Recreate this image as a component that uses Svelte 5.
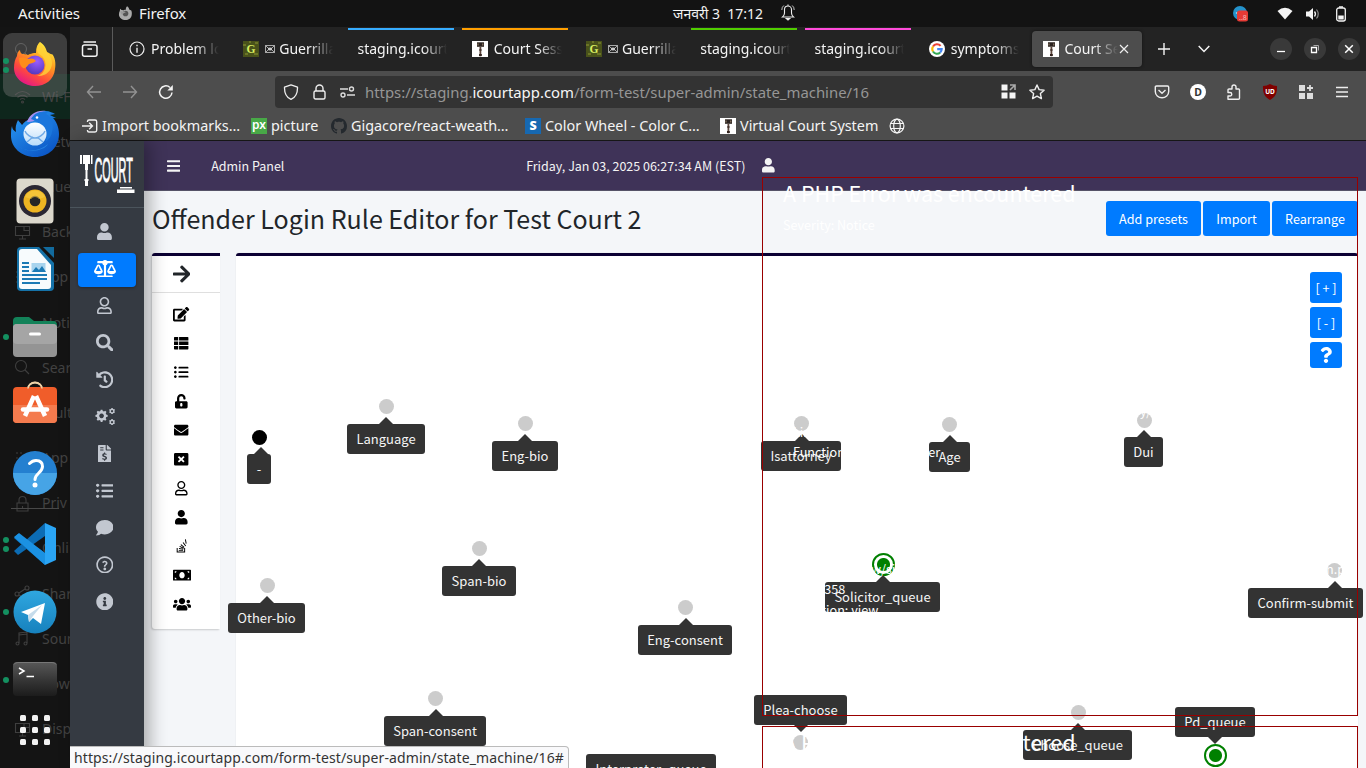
<script>
  const fa = {
    user: [448, 'M224 256c70.7 0 128-57.3 128-128S294.7 0 224 0 96 57.3 96 128s57.3 128 128 128zm89.6 32h-16.7c-22.2 10.2-46.9 16-72.9 16s-50.6-5.8-72.9-16h-16.7C60.2 288 0 348.2 0 422.4V464c0 26.5 21.5 48 48 48h352c26.5 0 48-21.5 48-48v-41.6c0-74.2-60.2-134.4-134.4-134.4z'],
    userO: [448, 'M313.6 304c-28.7 0-42.5 16-89.6 16-47.1 0-60.8-16-89.6-16C60.2 304 0 364.2 0 438.4V464c0 26.5 21.5 48 48 48h352c26.5 0 48-21.5 48-48v-25.6c0-74.2-60.2-134.4-134.4-134.4zM400 464H48v-25.6c0-47.6 38.8-86.4 86.4-86.4 14.6 0 38.3 16 89.6 16 51.7 0 74.9-16 89.6-16 47.6 0 86.4 38.8 86.4 86.4V464zM224 288c79.5 0 144-64.5 144-144S303.5 0 224 0 80 64.5 80 144s64.5 144 144 144zm0-240c52.9 0 96 43.1 96 96s-43.1 96-96 96-96-43.1-96-96 43.1-96 96-96z'],
    scale: [640, 'M256 336h-.02c0-16.18 1.34-8.73-85.05-181.51-17.65-35.29-68.19-35.36-85.87 0C-2.06 328.75.02 320.33.02 336H0c0 44.18 57.31 80 128 80s128-35.82 128-80zM128 176l72 144H56l72-144zm511.98 160c0-16.18 1.34-8.73-85.05-181.51-17.65-35.29-68.19-35.36-85.87 0-87.12 174.26-85.04 165.84-85.04 181.51H384c0 44.18 57.31 80 128 80s128-35.82 128-80h-.02zM440 320l72-144 72 144H440zm88 128H352V153.25c23.51-10.29 41.16-31.48 46.39-57.25H528c8.84 0 16-7.16 16-16V48c0-8.84-7.16-16-16-16H383.64C369.04 12.68 346.09 0 320 0s-49.04 12.68-63.64 32H112c-8.84 0-16 7.16-16 16v32c0 8.84 7.16 16 16 16h129.61c5.23 25.76 22.87 46.96 46.39 57.25V448H112c-8.84 0-16 7.16-16 16v32c0 8.84 7.16 16 16 16h416c8.84 0 16-7.16 16-16v-32c0-8.84-7.16-16-16-16z'],
    search: [512, 'M505 442.7L405.3 343c-4.5-4.5-10.6-7-17-7H372c27.6-35.3 44-79.7 44-128C416 93.1 322.9 0 208 0S0 93.1 0 208s93.1 208 208 208c48.3 0 92.7-16.4 128-44v16.3c0 6.4 2.5 12.5 7 17l99.7 99.7c9.4 9.4 24.6 9.4 33.9 0l28.3-28.3c9.4-9.4 9.4-24.6.1-34zM208 336c-70.7 0-128-57.2-128-128 0-70.7 57.2-128 128-128 70.7 0 128 57.2 128 128 0 70.7-57.2 128-128 128z'],
    history: [512, 'M504 255.531c.253 136.64-111.18 248.372-247.82 248.468-59.015.042-113.223-20.53-155.822-54.911-11.077-8.94-11.905-25.541-1.839-35.607l11.267-11.267c8.609-8.609 22.353-9.551 31.891-1.984C173.062 425.135 212.781 440 256 440c101.705 0 184-82.311 184-184 0-101.705-82.311-184-184-184-48.814 0-93.149 18.969-126.068 49.932l50.754 50.754c10.08 10.08 2.941 27.314-11.313 27.314H24c-8.837 0-16-7.163-16-16V38.627c0-14.254 17.234-21.393 27.314-11.314l49.372 49.372C129.209 34.136 189.552 8 256 8c136.81 0 247.747 110.78 248 247.531zm-180.912 78.784l9.823-12.63c8.138-10.463 6.253-25.542-4.21-33.679L288 256.349V152c0-13.255-10.745-24-24-24h-16c-13.255 0-24 10.745-24 24v135.651l65.409 50.874c10.463 8.137 25.541 6.253 33.679-4.21z'],
    cogs: [640, 'M185 90l10-40h50l10 40 36 15 36-22 36 36-22 36 15 36 42 10v50l-42 10-15 36 22 36-36 36-36-22-36 15-10 42h-50l-10-42-36-15-36 22-36-36 22-36-15-36-42-10v-50l42-10 15-36-22-36 36-36 36 22zM220 160a68 68 0 1 0 .1 0zM500 22l8-20h34l8 20 20 12 22-3 17 29-14 18v24l14 18-17 29-22-3-20 12-8 20h-34l-8-20-20-12-22 3-17-29 14-18v-24l-14-18 17-29 22 3zM525 60a32 32 0 1 0 .1 0zM500 342l8-20h34l8 20 20 12 22-3 17 29-14 18v24l14 18-17 29-22-3-20 12-8 20h-34l-8-20-20-12-22 3-17-29 14-18v-24l-14-18 17-29 22 3zM525 380a32 32 0 1 0 .1 0z'],
    invoice: [384, 'M377 105L279.100 7c-4.500-4.500-10.600-7-17-7H256v128h128v-6.100c0-6.300-2.500-12.400-7-16.900zM224 136V0H24C10.700 0 0 10.700 0 24v464c0 13.300 10.700 24 24 24h336c13.300 0 24-10.700 24-24V160H248c-13.200 0-24-10.800-24-24zM64 64h96v32H64zM64 128h96v32H64zM176 216h32v28c22 1 36 7 48 16l-20 28c-14-9-27-13-41-13-18 0-27 7-27 17 0 12 12 17 36 25 34 11 58 23 58 59 0 31-21 51-54 56v28h-32v-28c-22-2-41-9-58-22l21-29c16 12 31 17 48 17 20 0 30-7 30-19 0-14-14-19-38-27-32-11-55-23-55-56 0-28 20-48 52-53z'],
    list: [512, 'M48 48a48 48 0 1 0 .1 0zM48 208a48 48 0 1 0 .1 0zM48 368a48 48 0 1 0 .1 0zM176 64h320q16 0 16 16v32q0 16-16 16H176q-16 0-16-16V80q0-16 16-16zM176 224h320q16 0 16 16v32q0 16-16 16H176q-16 0-16-16v-32q0-16 16-16zM176 384h320q16 0 16 16v32q0 16-16 16H176q-16 0-16-16v-32q0-16 16-16z'],
    comment: [512, 'M256 32C114.600 32 0 125.100 0 240c0 49.600 21.400 95 57 130.700C44.500 421.100 2.700 466 2.200 466.500c-2.200 2.300-2.800 5.700-1.500 8.700S4.800 480 8 480c66.300 0 116-31.800 140.600-51.400 32.700 12.300 69 19.400 107.400 19.400 141.400 0 256-93.100 256-208S397.400 32 256 32z'],
    help: [512, 'M256 8a248 248 0 1 0 .1 0zM256 56a200 200 0 1 1-.1 0zM256 338a40 40 0 1 0 .1 0zM228 316v-12c0-50 58-58 58-92 0-18-14-28-32-28-19 0-30 9-42 24l-32-25c18-28 43-43 78-43 44 0 78 28 78 70 0 53-60 58-60 94v12z'],
    info: [512, 'M256 8C119.043 8 8 119.083 8 256c0 136.997 111.043 248 248 248s248-111.003 248-248C504 119.083 392.957 8 256 8zm0 110c23.196 0 42 18.804 42 42s-18.804 42-42 42-42-18.804-42-42 18.804-42 42-42zm56 254c0 6.627-5.373 12-12 12h-88c-6.627 0-12-5.373-12-12v-24c0-6.627 5.373-12 12-12h12v-64h-12c-6.627 0-12-5.373-12-12v-24c0-6.627 5.373-12 12-12h64c6.627 0 12 5.373 12 12v100h12c6.627 0 12 5.373 12 12v24z'],
    edit: [576, 'M402.600 83.200l90.200 90.200c3.800 3.800 3.800 10 0 13.800L274.400 405.600l-92.800 10.300c-12.400 1.400-22.900-9.100-21.500-21.500l10.300-92.800L388.800 83.200c3.800-3.800 10-3.800 13.800 0zm162-22.900l-48.800-48.800c-15.200-15.200-39.900-15.200-55.200 0l-35.400 35.400c-3.800 3.800-3.800 10 0 13.800l90.200 90.200c3.800 3.800 10 3.800 13.800 0l35.400-35.400c15.200-15.300 15.200-40 0-55.200zM384 346.200V448H64V128h229.800c3.200 0 6.200-1.300 8.500-3.500l40-40c7.600-7.600 2.200-20.500-8.500-20.500H48C21.500 64 0 85.500 0 112v352c0 26.500 21.500 48 48 48h352c26.500 0 48-21.500 48-48V306.200c0-10.700-12.900-16-20.500-8.500l-40 40c-2.200 2.300-3.500 5.300-3.500 8.500z'],
    thlist: [512, 'M0 56q0-24 24-24h125v128H0zM181 32h307q24 0 24 24v104H181zM0 192h149v128H0zM181 192h331v128H181zM0 352h149v128H24q-24 0-24-24zM181 352h331v104q0 24-24 24H181z'],
    unlock: [448, 'M400 256H152V152.900c0-39.600 31.700-72.500 71.300-72.900 40-.4 72.700 32.100 72.700 72v16c0 13.300 10.700 24 24 24h32c13.300 0 24-10.700 24-24v-16C376 68 307.500-.3 223.500 0 139.500.3 72 69.500 72 153.500V256H48c-26.500 0-48 21.500-48 48v160c0 26.500 21.500 48 48 48h352c26.500 0 48-21.500 48-48V304c0-26.500-21.500-48-48-48zM264 408c0 22.100-17.900 40-40 40s-40-17.900-40-40v-48c0-22.100 17.900-40 40-40s40 17.900 40 40v48z'],
    mail: [512, 'M502.300 190.800c3.900-3.100 9.700-.2 9.700 4.700V400c0 26.500-21.500 48-48 48H48c-26.500 0-48-21.500-48-48V195.600c0-5 5.700-7.800 9.700-4.700 22.400 17.400 52.100 39.500 154.100 113.600 21.100 15.400 56.700 47.800 92.200 47.600 35.700.3 72-32.800 92.300-47.600 102-74.100 131.600-96.300 154-113.700zM256 320c23.200.4 56.600-29.200 73.400-41.400 132.700-96.300 142.800-104.700 173.400-128.700 5.800-4.500 9.200-11.500 9.200-18.900v-19c0-26.500-21.500-48-48-48H48c-26.500 0-48 21.500-48 48v19c0 7.400 3.400 14.300 9.200 18.900 30.600 23.900 40.700 32.400 173.400 128.700 16.800 12.200 50.200 41.800 73.400 41.400z'],
    wclose: [512, 'M48 32h416q48 0 48 48v352q0 48-48 48H48q-48 0-48-48V80q0-48 48-48zM181 140l-45 45 71 71-71 71 45 45 75-71 75 71 45-45-71-71 71-71-45-45-75 71z'],
    stack: [384, 'M290 320h35v160H24V320h35v125h231zM98 396h155v35H98zM102 352l7-35 152 32-7 34zM122 280l15-32 141 66-15 32zM161 210l23-27 119 100-23 27zM238 137l28-21 93 125-28 21zM317 16l34-6 28 152-34 6z'],
    money: [640, 'M24 64h592q24 0 24 24v336q0 24-24 24H24q-24 0-24-24V88q0-24 24-24zM64 112v64q56-8 64-64zM576 112v64q-56-8-64-64zM64 400v-64q56 8 64 64zM576 400v-64q-56 8-64 64zM320 144c-53 0-96 50-96 112s43 112 96 112 96-50 96-112-43-112-96-112z'],
    users: [640, 'M96 224c35.300 0 64-28.700 64-64s-28.700-64-64-64-64 28.700-64 64 28.700 64 64 64zm448 0c35.300 0 64-28.700 64-64s-28.700-64-64-64-64 28.700-64 64 28.700 64 64 64zm32 32h-64c-17.600 0-33.500 7.100-45.100 18.600 40.300 22.100 68.900 62 75.100 109.400h66c17.700 0 32-14.300 32-32v-32c0-35.300-28.700-64-64-64zm-256 0c61.900 0 112-50.100 112-112S381.900 32 320 32 208 82.100 208 144s50.100 112 112 112zm76.800 32h-8.300c-20.800 10-43.900 16-68.500 16s-47.600-6-68.500-16h-8.300C179.600 288 128 339.600 128 403.200V432c0 26.500 21.500 48 48 48h288c26.500 0 48-21.500 48-48v-28.800c0-63.600-51.600-115.200-115.200-115.200zm-223.700-13.400C161.500 263.100 145.600 256 128 256H64c-35.300 0-64 28.700-64 64v32c0 17.700 14.300 32 32 32h65.900c6.300-47.400 34.900-87.300 75.200-109.400z'],
    arrow: [448, 'M190.500 66.900l22.200-22.200c9.400-9.400 24.600-9.400 33.900 0L441 239c9.400 9.400 9.400 24.600 0 33.900L246.600 467.300c-9.400 9.400-24.600 9.400-33.900 0l-22.200-22.200c-9.500-9.500-9.300-25 .4-34.300L311.400 296H24c-13.300 0-24-10.700-24-24v-32c0-13.300 10.700-24 24-24h287.400L190.900 101.200c-9.800-9.300-10-24.800-.4-34.300z'],
    bars: [448, 'M16 76h416q16 0 16 16v40q0 16-16 16H16q-16 0-16-16V92q0-16 16-16zM16 236h416q16 0 16 16v40q0 16-16 16H16q-16 0-16-16v-40q0-16 16-16zM16 396h416q16 0 16 16v40q0 16-16 16H16q-16 0-16-16v-40q0-16 16-16z'],
    question: [384, 'M202.021 0C122.202 0 70.503 32.703 29.914 91.026c-7.363 10.580-5.093 25.086 5.178 32.874l43.138 32.709c10.373 7.865 25.132 6.026 33.253-4.148 25.049-31.381 43.630-49.449 82.757-49.449 30.764 0 68.816 19.799 68.816 49.631 0 22.552-18.617 34.134-48.993 51.164-35.423 19.860-82.299 44.576-82.299 106.405V320c0 13.255 10.745 24 24 24h72.471c13.255 0 24-10.745 24-24v-5.773c0-42.860 125.268-44.645 125.268-160.627C377.504 66.256 286.902 0 202.021 0zM192 373.459c-38.196 0-69.271 31.075-69.271 69.271 0 38.195 31.075 69.270 69.271 69.270s69.271-31.075 69.271-69.271-31.075-69.270-69.271-69.270z']
  };

  const nav = ['user', 'scale', 'userO', 'search', 'history', 'cogs', 'invoice', 'list', 'comment', 'help', 'info'];
  const tools = ['edit', 'thlist', 'list', 'unlock', 'mail', 'wclose', 'userO', 'user', 'stack', 'money', 'users'];

  const settings = [
    ['wifi', 'Wi-F'], ['', 'Netw'], ['', 'Blue'], ['screen', 'Back'], ['grid', 'App'], ['', 'Noti'],
    ['search', 'Sear'], ['', 'Mult'], ['grid', 'App'], ['lock', 'Priv'], ['', 'Onli'],
    ['share', 'Shar'], ['music', 'Soun'], ['power', 'Pow'], ['screen', 'Disp']
  ];

  const dock = [
    ['firefox', 2], ['thunderbird', 0], ['rhythmbox', 0], ['writer', 0], ['files', 1], ['software', 0], ['help', 0],
    ['sep', 0], ['vscode', 2], ['telegram', 1], ['terminal', 1]
  ];

  const tabs = [
    { icon: 'info', text: 'Problem lo' },
    { icon: 'guerrilla', mail: true, text: 'Guerrilla' },
    { text: 'staging.icourt', line: '#37adff' },
    { icon: 'gavel', text: 'Court Sess', line: '#ff9f00' },
    { icon: 'guerrilla', mail: true, text: 'Guerrilla' },
    { text: 'staging.icourt', line: '#51cd00' },
    { text: 'staging.icourt', line: '#ff4bda' },
    { icon: 'google', text: 'symptoms' },
    { icon: 'gavel', text: 'Court Se', active: true }
  ];

  const marks = [
    { icon: 'import', text: 'Import bookmarks…', w: 169 },
    { icon: 'px', text: 'picture', w: 80 },
    { icon: 'github', text: 'Gigacore/react-weath…', w: 194 },
    { icon: 's', text: 'Color Wheel - Color C…', w: 195 },
    { icon: 'gavel', text: 'Virtual Court System', w: 169 },
    { icon: 'globe', text: '', w: 20 }
  ];

  // Node centre (x, y) and its label: left (l), top (b) and width (w).
  const nodes = [
    { x: 259, y: 437, c: 'start', t: '-', l: 247, b: 454, w: 24, ax: 14 },
    { x: 386, y: 406.5, t: 'Language', l: 347, b: 424, w: 78 },
    { x: 525, y: 423.500, t: 'Eng-bio', l: 492, b: 441, w: 66 },
    { x: 801.5, y: 423.500, t: 'Isattorney', l: 761, b: 441, w: 80 },
    { x: 949.5, y: 424.500, t: 'Age', l: 929, b: 442, w: 41 },
    { x: 1144, y: 420, t: 'Dui', l: 1124, b: 437, w: 39 },
    { x: 479, y: 548, t: 'Span-bio', l: 442, b: 566, w: 74 },
    { x: 267, y: 585, t: 'Other-bio', l: 228, b: 603, w: 77 },
    { x: 883, y: 564.500, c: 'end', t: 'Solicitor_queue', l: 825, b: 582, w: 115 },
    { x: 685.5, y: 607.500, t: 'Eng-consent', l: 638, b: 625, w: 94 },
    { x: 1334.5, y: 570, t: 'Confirm-submit', l: 1248, b: 588, w: 115 },
    { x: 435.5, y: 698.500, t: 'Span-consent', l: 384, b: 716, w: 102 },
    { x: 800.5, y: 742.500, t: 'Plea-choose', l: 754, b: 695, w: 93, up: true },
    { x: 1078, y: 712.500, t: 'Choose_queue', l: 1023, b: 730, w: 109 },
    { x: 1215, y: 755, c: 'end', t: 'Pd_queue', l: 1175, b: 707, w: 80, up: true },
    { x: 651, y: 737, t: 'Interpreter_queue', l: 586, b: 754, w: 130, noDot: true }
  ];
</script>

{#snippet glyph(name, size)}
  <svg class="glyph" height={size} width={(size * fa[name][0]) / 512} viewBox="0 0 {fa[name][0]} 512"><path fill-rule="evenodd" d={fa[name][1]} /></svg>
{/snippet}

{#snippet fav(name)}
  <svg class="fav" width="16" height="16" viewBox="0 0 16 16">
    {#if name === 'info'}
      <circle cx="8" cy="8" r="7" fill="none" stroke="#eee" stroke-width="1.200" /><path d="M7.300 3.800h1.400v1.500H7.300zM7.300 6.800h1.400v5H7.300z" fill="#eee" />
    {:else if name === 'guerrilla'}
      <rect width="16" height="16" fill="#49521a" /><path d="M0 3h3v2H0zM12 1h3v2h-3zM2 12h3v2H2zM11 12h4v2h-4zM6 0h2v2H6z" fill="#6b7526" />
      <text x="8" y="12" text-anchor="middle" font-family="Liberation Serif, serif" font-weight="bold" font-size="11.500" fill="#d8ee60">G</text>
    {:else if name === 'gavel'}
      <rect width="16" height="16" fill="#fff" /><path d="M5 1.300h7v4.500H5z" fill="#2b2320" /><path d="M7.500 5.800h1.800v9.500H7.500z" fill="#5d463c" /><path d="M5.500 2.500h1v2h-1zM10.300 2.500h1v2h-1z" fill="#a08a72" /><path d="M7 13h2.800v2H7zM7 8.500h2.800v1H7z" fill="#33231e" />
    {:else if name === 'google'}
      <circle cx="8" cy="8" r="8" fill="#fff" /><g fill="none" stroke-width="2.100"><path d="M11.600 4.900A4.700 4.700 0 0 0 4 5.500" stroke="#ea4335" /><path d="M4 5.500a4.700 4.700 0 0 0 0 5" stroke="#fbbc05" /><path d="M4 10.500a4.700 4.700 0 0 0 7.200 1" stroke="#34a853" /><path d="M11.200 11.500A4.700 4.700 0 0 0 12.700 8.100H8.200" stroke="#4285f4" /></g>
    {:else if name === 'import'}
      <path d="M5.500 4V3.500q0-1.500 1.500-1.500h6q1.700 0 1.700 1.700v8.600q0 1.700-1.700 1.700H7q-1.500 0-1.500-1.500V12M0 8h10M7.200 4.800L10.400 8l-3.200 3.200" fill="none" stroke="#f4f4f4" stroke-width="1.400" />
    {:else if name === 'px'}
      <rect width="16" height="16" fill="#48a947" /><text x="8" y="11" text-anchor="middle" font-family="Noto Sans, sans-serif" font-size="12" font-weight="600" fill="#fff">px</text>
    {:else if name === 'github'}
      <path fill="#24292e" d="M8 0C3.580 0 0 3.580 0 8c0 3.540 2.290 6.530 5.470 7.590.4.070.55-.17.55-.38 0-.19-.01-.82-.01-1.490-2.010.37-2.530-.49-2.690-.94-.09-.23-.48-.94-.82-1.130-.28-.15-.68-.52-.01-.53.63-.01 1.080.58 1.230.82.72 1.210 1.870.87 2.330.66.070-.52.28-.87.51-1.070-1.780-.2-3.640-.89-3.640-3.950 0-.87.31-1.590.82-2.150-.08-.2-.36-1.020.08-2.120 0 0 .67-.21 2.200.82.64-.18 1.320-.27 2-.27s1.360.09 2 .27c1.530-1.040 2.200-.82 2.200-.82.44 1.100.16 1.920.08 2.120.51.56.82 1.270.82 2.150 0 3.070-1.870 3.750-3.650 3.950.29.25.54.73.54 1.480 0 1.070-.01 1.930-.01 2.200 0 .21.15.46.55.38A8.010 8.010 0 0 0 16 8c0-4.420-3.580-8-8-8z" />
    {:else if name === 's'}
      <rect width="16" height="16" fill="#1668b1" /><text x="8" y="12.300" text-anchor="middle" font-family="Noto Sans, sans-serif" font-size="12.500" font-weight="900" fill="#fff">S</text>
    {:else if name === 'globe'}
      <g fill="none" stroke="#f4f4f4" stroke-width="1.200"><circle cx="8" cy="8" r="6.900" /><ellipse cx="8" cy="8" rx="3.300" ry="6.900" /><path d="M1.500 5.500h13M1.500 10.500h13" /></g>
    {/if}
  </svg>
{/snippet}

{#snippet app(name)}
  <svg class="app" width="48" height="48" viewBox="0 0 48 48">
    {#if name === 'firefox'}
      <defs>
        <linearGradient id="ff1" x1=".8" y1=".1" x2=".3" y2="1"><stop offset="0" stop-color="#ffe83a" /><stop offset=".35" stop-color="#ff9a1f" /><stop offset=".7" stop-color="#ff4a3d" /><stop offset="1" stop-color="#e3158a" /></linearGradient>
        <radialGradient id="ff2" cx=".6" cy=".3" r=".8"><stop offset="0" stop-color="#9b5cff" /><stop offset="1" stop-color="#4c34b5" /></radialGradient>
      </defs>
      <path d="M29 1c5 3 6 7 7 10 3 1 4 3 5 2 3 3 4 9 3 15-1 11-10 17-20 17S3 38 3 27c0-5 1-9 3-12 0-2 1-5 3-6 0 2 1 3 2 4 2 0 4 0 6 1 0 0 3-2 8-2 0-5 1-8 4-11z" fill="url(#ff1)" />
      <path d="M29 1c-4 4-4 9-1 12 4 2 8 7 6 14-1 4-4 7-8 8 8 1 15-5 15-13 0-5-3-8-5-11s-6-6-7-10z" fill="#ffd338" opacity=".8" />
      <circle cx="24" cy="24" r="9.500" fill="url(#ff2)" />
      <path d="M8 17c4-1 7 0 9 1 3-1 6-1 8 2-2 2-5 2-7 3-2 2-3 5-6 4-3-2-4-6-4-10z" fill="#ff8c1a" />
    {:else if name === 'thunderbird'}
      <defs>
        <linearGradient id="tb" x1="0" y1="0" x2=".7" y2="1"><stop offset="0" stop-color="#2b9df5" /><stop offset="1" stop-color="#0b56c6" /></linearGradient>
        <linearGradient id="tw" x1="0" y1="0" x2="0" y2="1"><stop offset="0" stop-color="#fff" /><stop offset="1" stop-color="#b9dcfa" /></linearGradient>
      </defs>
      <path d="M1 17c0 3 2 5 4 6-1-4 0-8 2-12 1 2 3 3 4 5 2-3 5-5 8-6 3-6 9-8 15-8 5 0 8 2 10 3l-5 1 6 3h-3c3 3 6 9 6 16 0 13-10 23-24 23S0 38 0 27c0-4 0-7 1-10z" fill="url(#tb)" />
      <path d="M16 13c3-8 9-12 19-11-6 1-8 4-10 7-1 3-4 4-9 4z" fill="#a690ef" />
      <path d="M20 10c3-6 10-9 17-7l-2 2c6 3 8 10 6 18-1 5-3 7-6 9 2-9-4-19-15-22z" fill="#1a76dc" />
      <circle cx="24" cy="25" r="11.500" fill="url(#tw)" /><path d="M14 22c1 3 6 7 10 7s9-4 10-7M16 33l6-5M32 33l-6-5" fill="none" stroke="#6ea9e6" stroke-width="1.400" />
      <path d="M3 34c8 9 24 10 34 1-4 8-24 10-34-1z" fill="#3aa6f8" opacity=".5" />
      <circle cx="26" cy="8.500" r="1.300" fill="#fff" />
    {:else if name === 'rhythmbox'}
      <rect x="5.500" y="1.500" width="37" height="45" rx="4" fill="#dcd8cc" /><circle cx="24" cy="24" r="16" fill="#2b2733" /><circle cx="24" cy="24" r="11.500" fill="#eeb422" /><circle cx="24" cy="24" r="5.300" fill="#252526" /><path d="M14 20a11 11 0 0 1 20 0l-6 2a5 5 0 0 0-8 0z" fill="#f8cd48" opacity=".6" />
    {:else if name === 'writer'}
      <path d="M10 2h18l15 16v24q0 4-4 4H10q-4 0-4-4V6q0-4 4-4z" fill="#1572a8" /><path d="M11 4h15l14 16v21q0 3-3 3H11q-3 0-3-3V7q0-3 3-3z" fill="#f7fbfd" /><path d="M32 2h11v11z" fill="#126b9e" />
      <path d="M11 18h7M11 22h7M11 26h7M11 30h25M11 34h25M11 38h18" stroke="#1b7ab5" stroke-width="2.200" /><rect x="20.500" y="18" width="14" height="9" fill="#a8d4ee" /><path d="M21 27l4-5 3 3 3-4 4 6z" fill="#1b7ab5" />
    {:else if name === 'files'}
      <path d="M2 8q0-4 4-4h12l5 4h19q4 0 4 4v8H2z" fill="#138259" /><rect x="2" y="11" width="44" height="33" rx="4" fill="#949494" /><rect x="2" y="11" width="44" height="20" rx="4" fill="#a5a5a5" /><rect x="18" y="19.500" width="12" height="3" rx="1.500" fill="#fff" />
    {:else if name === 'software'}
      <path d="M17 8a7 6.500 0 0 1 14 0" fill="none" stroke="#efd2a8" stroke-width="1.800" /><rect x="2" y="6" width="44" height="36" rx="4" fill="#f05d2a" /><path d="M2 24h44v14q0 4-4 4H6q-4 0-4-4z" fill="#f47b4e" /><path d="M17 7.500a7 6 0 0 1 14 0" fill="none" stroke="#efd2a8" stroke-width="1.500" /><path d="M23 15l-9 20M25 15l9 20" stroke="#fff" stroke-width="4.500" fill="none" /><path d="M12 28.500h24" stroke="#fff" stroke-width="4.500" stroke-linecap="round" />
    {:else if name === 'help'}
      <circle cx="24" cy="24" r="22" fill="#2480d0" /><path d="M2 24a22 22 0 0 0 44 0z" fill="#46a4e6" /><path d="M18.500 14.500q3-3 6.500-3 6.500 0 6.500 6c0 6-7.500 7-7.500 13" fill="none" stroke="#fff" stroke-width="3" stroke-linecap="round" /><circle cx="24" cy="36" r="2.500" fill="#fff" />
    {:else if name === 'vscode'}
      <path d="M34 3L45 8v32l-11 5z" fill="#2aa5f5" /><path d="M34 45L3 18l4-4 27 19z" fill="#0a78c8" /><path d="M3 31L34 3v13L7 35z" fill="#0c6cb4" /><path d="M34 45V33L8 13l-5 4z" fill="#1b91e2" />
    {:else if name === 'telegram'}
      <defs><linearGradient id="tg" x1="0" y1="0" x2="0" y2="1"><stop offset="0" stop-color="#2fa7e0" /><stop offset="1" stop-color="#1781bd" /></linearGradient></defs>
      <circle cx="24" cy="24" r="21.500" fill="url(#tg)" /><path d="M10 24l24-9-4 21-8-6-4 4-1-7z" fill="#fff" /><path d="M17 27l14-10-9 11-4 6z" fill="#c6dceb" />
    {:else if name === 'terminal'}
      <defs><linearGradient id="tm" x1="0" y1="0" x2="0" y2="1"><stop offset="0" stop-color="#585858" /><stop offset=".55" stop-color="#353535" /><stop offset="1" stop-color="#1c1c1c" /></linearGradient></defs>
      <rect x="2" y="6" width="44" height="34" rx="4" fill="url(#tm)" /><path d="M3 8.500q1-2 4-2h34q3 0 4 2" stroke="#777" fill="none" /><path d="M8 12l5 3-5 3M15.500 20.500H23" stroke="#fff" stroke-width="1.500" fill="none" />
    {/if}
  </svg>
{/snippet}

<div class="desktop">
  <header class="topbar">
    <span class="activities">Activities</span>
    <svg class="ffgray" width="15" height="15" viewBox="0 0 48 48"><path d="M29 1c5 3 6 7 7 10 3 1 4 3 5 2 3 3 4 9 3 15-1 11-10 17-20 17S3 38 3 27c0-5 1-9 3-12 0-2 1-5 3-6 0 2 1 3 2 4 2 0 4 0 6 1 0 0 3-2 8-2 0-5 1-8 4-11z" fill="#aaa" /><circle cx="24" cy="24" r="9" fill="#555" /><path d="M8 17c4-1 7 0 9 1 3-1 6-1 8 2-2 2-5 2-7 3-2 2-3 5-6 4-3-2-4-6-4-10z" fill="#999" /></svg>
    <span class="appname">Firefox</span>
    <span class="clock">जनवरी 3&nbsp; 17:12</span>
    <svg class="bell" width="14" height="17" viewBox="0 0 14 17" fill="none" stroke="#eee" stroke-width="1.100"><path d="M1.500 13h11q-2-1.500-2-4V5.500a3.500 3.500 0 0 0-7 0V9q0 2.500-2 4zM7 2V.5" /><path d="M5.300 14.500h3.400L7 16z" fill="#eee" /><path d="M.8 6q0-3 2-4.500M13.200 6q0-3-2-4.500" stroke-width=".8" /></svg>
    <span class="grow"></span>
    <svg class="tray" width="16" height="16" viewBox="0 0 16 16"><circle cx="7" cy="7" r="7" fill="#2492cb" /><path d="M2.500 7l2-1v2z" fill="#fff" /><rect x="4" y="4.500" width="11" height="11" rx="2.500" fill="#e53a35" /><text x="6" y="13.500" font-family="Noto Sans, sans-serif" font-size="7" fill="#f6b9b7">..8</text></svg>
    <svg class="wifi" width="16" height="13" viewBox="0 0 16 13"><path d="M.5 4Q8-2.500 15.500 4L8 12.500z" fill="#f4f4f4" /></svg>
    <svg class="vol" width="16" height="14" viewBox="0 0 16 14"><path d="M1 4.500h3L8 1v12L4 9.500H1z" fill="#f4f4f4" /><path d="M9.500 4.500q2 2.500 0 5" fill="none" stroke="#f4f4f4" stroke-width="1.300" /><path d="M11.500 2.500q3.500 4.500 0 9" fill="none" stroke="#888" stroke-width="1.200" /></svg>
    <svg class="bat" width="10" height="16" viewBox="0 0 10 16"><rect x=".7" y="2" width="8.600" height="13" rx="2" fill="none" stroke="#f4f4f4" stroke-width="1.300" /><path d="M3 .3h4v1.500H3zM2.300 9.500h5.400v4H2.300z" fill="#f4f4f4" /></svg>
  </header>

  <div class="work">
    <aside class="dock">
      <div class="ghost">
        <div class="grow-row first"><svg width="17" height="17" viewBox="0 0 17 17" fill="none" stroke="#555"><circle cx="7" cy="7" r="5.500" /><path d="M11 11l4 4" /></svg></div>
        {#each settings as [ic, label], i}
          <div class="grow-row" class:sel={i === 0}>
            <svg width="17" height="17" viewBox="0 0 17 17" fill="none" stroke="#3f3f3f" stroke-width="1.100">
              {#if ic === 'wifi'}<path d="M1 7q7.500-7 15 0M3.500 9.500q5-4.500 10 0M6 11.500q2.500-2 5 0" /><circle cx="8.500" cy="14" r="1" />
              {:else if ic === 'screen'}<path d="M1.500 2.500h14v9h-14zM5 15h7M8.500 12v3M10 2.500v4h5" />
              {:else if ic === 'search'}<circle cx="7" cy="7" r="5.500" /><path d="M11 11l4 4" />
              {:else if ic === 'lock'}<path d="M3 8h11v8H3zM5 8V5q0-3.500 3.500-3.500T12 5v3M8.500 11v2" />
              {:else if ic === 'share'}<circle cx="3" cy="9" r="2" /><circle cx="13" cy="3" r="2" /><circle cx="13" cy="14" r="2" /><path d="M5 8l6-4M5 10l6 3" />
              {:else if ic === 'music'}<path d="M5 13V3l8-1v11M5 5l8-1" /><circle cx="3.500" cy="13.500" r="1.500" /><circle cx="11.500" cy="13.500" r="1.500" />
              {:else if ic === 'power'}<circle cx="8.500" cy="8.500" r="7" /><path d="M9.500 4L6 9h5l-3.500 4" />
              {:else if ic === 'grid'}<path d="M2 3h2M2 8h2M2 13h2M6 3h2M6 8h2M6 13h2" />{/if}
            </svg>
            <span>{label}</span>
          </div>
        {/each}
      </div>
      <div class="dock-items">
        {#each dock as [name, dots]}
          {#if name === 'sep'}
            <div class="dock-sep"></div>
          {:else}
            <div class="dock-item" class:on={name === 'firefox'}>
              <div class="dots">{#each Array(dots) as _}<i></i>{/each}</div>
              {@render app(name)}
            </div>
          {/if}
        {/each}
        <div class="apps">{#each Array(9) as _}<i></i>{/each}</div>
      </div>
    </aside>

    <main class="browser">
      <div class="tabbar">
        <div class="view">
          <svg width="18" height="18" viewBox="0 0 18 18" fill="none" stroke="#f4f4f4" stroke-width="1.500"><rect x="1.500" y="5" width="14.500" height="11.200" rx="2" /><path d="M2.500 2h12.500M6.500 9h4.500" /></svg>
        </div>
        {#each tabs as t}
          <div class="tab" class:active={t.active}>
            <div class="tab-line" style:background={t.line ?? 'transparent'}></div>
            <div class="tab-body">
              {#if t.icon}{@render fav(t.icon)}{/if}
              {#if t.mail}<svg class="env" width="10" height="8" viewBox="0 0 10 8" fill="none" stroke="#ccc" stroke-width=".8"><path d="M.5 .5h9v7h-9zM.5 .5L4 4M9.500 .5L6 4M.5 7.500L4 4M9.500 7.500L6 4" /><path d="M3.500 3h3v2h-3z" fill="#ccc" /></svg>{/if}
              <span class="tab-text">{t.text}</span>
              {#if t.active}<svg class="x" width="10" height="10" viewBox="0 0 10 10"><path d="M1 1l8 8M9 1L1 9" stroke="#eee" stroke-width="1.200" /></svg>{/if}
            </div>
          </div>
        {/each}
        <svg class="plus" width="12" height="12" viewBox="0 0 12 12"><path d="M6 0v12M0 6h12" stroke="#f4f4f4" stroke-width="1.400" /></svg>
        <svg class="chev" width="12" height="8" viewBox="0 0 12 8"><path d="M.7 1L6 6.500 11.300 1" fill="none" stroke="#f4f4f4" stroke-width="1.500" /></svg>
        <span class="grow"></span>
        <div class="wins">
          <span><svg width="10" height="10" viewBox="0 0 10 10"><path d="M1 7.500h8" stroke="#fff" stroke-width="1.300" /></svg></span>
          <span><svg width="10" height="10" viewBox="0 0 10 10" fill="none"><path d="M1.500 3.500h5v5h-5z" stroke="#fff" stroke-width="1.300" /><path d="M3.500 1.500H8.500v5" stroke="#aaa" /></svg></span>
          <span><svg width="10" height="10" viewBox="0 0 10 10"><path d="M1.200 1.200l7.600 7.600M8.800 1.200L1.200 8.800" stroke="#fff" stroke-width="1.500" /></svg></span>
        </div>
      </div>

      <div class="toolbar">
        <svg class="back" width="16" height="14" viewBox="0 0 16 14" fill="none" stroke="#929292" stroke-width="1.400"><path d="M1.500 7H15M7 1L1.500 7 7 13" /></svg>
        <svg class="fwd" width="16" height="14" viewBox="0 0 16 14" fill="none" stroke="#929292" stroke-width="1.400"><path d="M14.500 7H1M9 1l5.500 6L9 13" /></svg>
        <svg class="reload" width="16" height="16" viewBox="0 0 16 16"><path d="M14 8.500A6.200 6.200 0 1 1 12 3.500" fill="none" stroke="#f4f4f4" stroke-width="1.500" /><path d="M14.800 1v5.500H9.300z" fill="#f4f4f4" /></svg>
        <div class="url">
          <svg class="shield" width="16" height="16" viewBox="0 0 16 16"><path d="M8 .9l6.500 2.300c.2 6-1.500 10-6.500 12.200C3 13.200 1.300 9.200 1.500 3.200z" fill="none" stroke="#eee" stroke-width="1.300" stroke-linejoin="round" /></svg>
          <svg class="lock" width="13" height="16" viewBox="0 0 13 16" fill="none" stroke="#eee" stroke-width="1.400"><rect x="1" y="7" width="11" height="8" rx="1.500" /><path d="M3 7V4.500a3.500 3.500 0 0 1 7 0V7" /></svg>
          <svg class="perm" width="15" height="12" viewBox="0 0 15 12" fill="none" stroke="#ddd" stroke-width="1.400"><path d="M0 3h8M7 9h8" /><circle cx="11.500" cy="3" r="2" /><circle cx="3" cy="9" r="2" /></svg>
          <span class="addr">https://staging.<b>icourtapp.com</b>/form-test/super-admin/state_machine/16</span>
          <svg class="apx" width="15" height="15" viewBox="0 0 15 15"><path d="M.5.5h6v6h-6zM.5 8.500h6v6h-6zM8.500 8.500h6v6h-6z" fill="#f4f4f4" /><path d="M9 1h5v5M13.500 1.500L9 6" fill="none" stroke="#aaa" stroke-width="1.600" /></svg>
          <svg class="star" width="16" height="16" viewBox="0 0 16 16"><path d="M8 1l2.100 4.600 5 .6-3.700 3.400 1 5L8 12.100 3.600 14.600l1-5L.9 6.200l5-.6z" fill="none" stroke="#eee" stroke-width="1.400" stroke-linejoin="round" /></svg>
        </div>
        <span class="grow"></span>
        <div class="ext">
          <svg width="16" height="16" viewBox="0 0 16 16" fill="none" stroke="#eee" stroke-width="1.400"><path d="M2.500 2h11q1.200 0 1.200 1.200V7.500a6.700 6.300 0 0 1-13.400 0V3.200Q1.300 2 2.500 2z" /><path d="M4.500 6L8 9.200 11.500 6" /></svg>
          <svg width="16" height="16" viewBox="0 0 16 16"><circle cx="8" cy="8" r="8" fill="#fff" /><text x="8" y="11.800" text-anchor="middle" font-family="Noto Sans, sans-serif" font-weight="bold" font-size="10.500" fill="#333">D</text></svg>
          <svg width="16" height="16" viewBox="0 0 16 16" fill="none" stroke="#eee" stroke-width="1.400" stroke-linejoin="round"><path d="M2 15.300h10.500q1 0 1-1V6q0-1-1-1H10V3a2 2 0 0 0-4 0v2H3q-1 0-1 1v2.500h2a1.600 1.600 0 0 1 0 3.500H2z" /></svg>
          <svg width="16" height="16" viewBox="0 0 16 16"><path d="M8 0q3 2 7 2c.3 6-1 11-7 14C2 13 .7 8 1 2q4 0 7-2z" fill="#800000" /><text x="8" y="9.600" text-anchor="middle" font-family="Noto Sans, sans-serif" font-weight="bold" font-size="6.500" fill="#fff">UD</text></svg>
          <svg width="16" height="16" viewBox="0 0 16 16"><path d="M1 1h6v6H1zM1 9h6v6H1zM9 9h6v6H9z" fill="#ddd" /><path d="M12 1v6M9 4h6" stroke="#ddd" stroke-width="1.800" /></svg>
          <svg width="16" height="16" viewBox="0 0 16 16"><path d="M2 3.500h12M2 8h12M2 12.500h12" stroke="#eee" stroke-width="1.300" /></svg>
        </div>
      </div>

      <div class="bookmarks">
        {#each marks as m}
          <div class="mark" style:width="{m.w}px">{@render fav(m.icon)}{#if m.text}<span>{m.text}</span>{/if}</div>
        {/each}
      </div>

      <section class="page">
        <nav class="side">
          <div class="brand">
            <svg width="58" height="42" viewBox="0 0 58 42">
              <g fill="#fff"><path d="M2 2h2v9H2zM5 2h7v9H5zM13 2h1.500v9H13z" /><path d="M7 11h3v6H7zM7.500 17h2v9h-2zM6.500 26h4v2h-4zM7 28h3v5H7z" /><rect x="42" y="34" width="12" height="1.500" /><rect x="39" y="36.500" width="17.500" height="3.500" /></g>
              <text transform="translate(16.500 29) scale(.309 1)" font-family="Liberation Sans, sans-serif" font-size="35" fill="#fff" stroke="#fff" stroke-width=".7" vector-effect="non-scaling-stroke">COURT</text>
            </svg>
          </div>
          <div class="menu">
            {#each nav as n, i}
              <a class="menu-item" class:active={i === 1} href="#top" aria-label={n}>{@render glyph(n, i === 0 || i === 2 ? 17 : 17.600)}</a>
            {/each}
          </div>
        </nav>

        <div class="content">
          <div class="navbar">
            {@render glyph('bars', 15)}
            <span class="nb-title">Admin Panel</span>
            <span class="nb-date">Friday, Jan 03, 2025 06:27:34 AM (EST)</span>
            {@render glyph('user', 14.500)}
          </div>
          <div class="title-row">
            <h1>Offender Login Rule Editor for Test Court 2</h1>
            <div class="btns"><button>Add presets</button><button>Import</button><button>Rearrange</button></div>
          </div>
          <div class="cards">
            <div class="palette">
              <div class="pal-head">{@render glyph('arrow', 20)}</div>
              <div class="pal-list">{#each tools as t}<span>{@render glyph(t, 14.400)}</span>{/each}</div>
            </div>
            <div class="canvas">
              <div class="zoom"><button>[ + ]</button><button>[ - ]</button><button class="q">{@render glyph('question', 16)}</button></div>
            </div>
          </div>
        </div>
      </section>
    </main>
  </div>

  <div class="diagram">
    {#each nodes as n}
      {#if !n.noDot}<i class="dot {n.c ?? ''}" style:left="{n.x}px" style:top="{n.y}px"></i>{/if}
      <div class="tip" class:up={n.up} class:bare={n.noDot} style:left="{n.l}px" style:top="{n.b}px" style:width="{n.w}px" style:--ax="{n.ax ?? n.x - n.l}px">{n.t}</div>
    {/each}
    <div class="err one">
      <h2>A PHP Error was encountered</h2>
      <p>Severity: Notice</p>
      <p class="trace"><span class="dir">y/</span><br />Line: 358<br />Function: _error_handler</p>
      <p class="trace two"><span class="tail">w/si</span><span class="ext-end">n.p</span><br />Line: 358<br />Function: view</p>
    </div>
    <div class="err other"><h2>A PHP Error was encountered</h2></div>
    <div class="status">https://staging.icourtapp.com/form-test/super-admin/state_machine/16#</div>
  </div>
</div>

<style>
  :global(body) { margin: 0; background: #131313; overflow: hidden; }
  * { box-sizing: border-box; }
  .desktop { position: relative; width: 1366px; height: 768px; overflow: hidden; display: flex; flex-direction: column; font-family: "Noto Sans", sans-serif; font-size: 14px; color: #f4f4f4; }
  svg { display: block; flex: none; }
  .glyph { fill: currentColor; }
  .grow { flex: 1; }
  .topbar { height: 27px; flex: none; background: #131313; display: flex; align-items: center; white-space: nowrap; line-height: 27px; }
  .activities { width: 100px; padding-left: 18px; margin-right: 18px; font-size: 15px; letter-spacing: -.05px; }
  .appname { margin-left: 6px; width: 76px; font-size: 15px; letter-spacing: -.1px; }
  .clock { margin-left: 458px; width: 91px; }
  .bell { margin-left: 17px; margin-top: -2px; }
  .wifi { margin-left: 28px; }
  .vol { margin-left: 12px; }
  .bat { margin: 0 20px 0 15px; }
  .work { flex: 1; display: flex; min-height: 0; }

  .dock { position: relative; width: 70px; flex: none; background: #141414; overflow: hidden; }
  .ghost { position: absolute; inset: 0; color: #424242; }
  .grow-row { height: 45.200px; display: flex; align-items: center; padding-left: 14px; gap: 11px; line-height: 20px; white-space: nowrap; }
  .grow-row.first { height: 47px; }
  .grow-row.sel { background: #0e261c; }
  .dock-items { position: relative; padding-top: 4px; display: flex; flex-direction: column; align-items: center; }
  .dock-item { height: 68px; width: 70px; display: flex; align-items: center; }
  .dock-item.on { width: 64px; height: 64px; margin: 2px 0; border-radius: 9px; background: rgba(120, 120, 120, .42); }
  .dots { width: 11px; padding-left: 3px; display: flex; flex-direction: column; gap: 3px; }
  .dots i { width: 6px; height: 6px; border-radius: 50%; background: #149060; }
  .on .dots { width: 8px; padding-left: 0; }
  .dock-sep { height: 1px; width: 48px; background: #484848; margin: 1px 0; }
  .apps { margin-top: 1px; display: grid; grid-template-columns: repeat(3, 6px); gap: 6px; }
  .apps i { width: 6px; height: 6px; border-radius: 1.500px; background: #f2f2f2; }

  .browser { flex: 1; min-width: 0; display: flex; flex-direction: column; }
  .tabbar { height: 44px; background: #232323; display: flex; align-items: center; }
  .view { width: 43px; height: 44px; border-right: 1px solid #5b5b5b; display: flex; align-items: center; justify-content: center; margin-right: 2.500px; padding-right: 3px; }
  .tab { width: 114.250px; height: 44px; flex: none; padding: 0 2px 0 3px; display: flex; flex-direction: column; }
  .tab-line { height: 2px; margin: 1px 2.500px 1px 1px; }
  .tab-body { height: 36px; display: flex; align-items: center; padding-left: 10.500px; overflow: hidden; }
  .active .tab-body { background: #4d4d4d; border-radius: 4px; box-shadow: 0 0 3px #111; margin-left: -.5px; }
  .tab-text { margin-left: 6px; flex: 1; white-space: nowrap; overflow: hidden; line-height: 22px; margin-right: 9px; mask-image: linear-gradient(to right, #000 calc(100% - 24px), transparent); }
  .tab-line + .tab-body > .tab-text:first-child { margin-left: 0; }
  .env { margin-left: 6px; }
  .env + .tab-text { margin-left: 4px; }
  .active .tab-text { margin-right: 1px; }
  .x { margin-right: 13px; }
  .plus { margin-left: 14px; }
  .chev { margin-left: 28px; }
  .wins { display: flex; gap: 12px; margin-right: 6px; }
  .wins span { width: 22px; height: 22px; border-radius: 50%; background: #393939; display: flex; align-items: center; justify-content: center; }

  .toolbar { height: 41px; background: #4d4d4d; display: flex; align-items: center; }
  .back { margin-left: 16px; }
  .fwd { margin-left: 20px; }
  .reload { margin-left: 20px; }
  .url { margin-left: 101px; width: 778px; height: 32px; border-radius: 4px; background: #333; display: flex; align-items: center; padding-left: 8px; }
  .lock { margin-left: 14px; }
  .perm { margin-left: 14px; }
  .addr { margin-left: 10px; color: #969696; flex: 1; white-space: nowrap; line-height: 20px; font-size: 14.900px; }
  .addr b { font-weight: 400; color: #f6f6f6; }
  .star { margin: 0 8px 0 13px; }
  .ext { display: flex; gap: 20px; margin-right: 16px; }
  .bookmarks { height: 29px; background: #4d4d4d; border-bottom: 1px solid #161616; display: flex; align-items: center; padding-left: 12px; font-size: 14.400px; }
  .mark { display: flex; align-items: center; gap: 4px; white-space: nowrap; flex: none; line-height: 20px; }

  .page { flex: 1; display: flex; min-height: 0; background: #f4f6f9; font-family: "Noto Sans CJK SC", sans-serif; }
  .side { width: 74px; flex: none; background: #353a42; box-shadow: 6px 0 16px rgba(0, 0, 0, .3); z-index: 1; }
  .brand { height: 67px; border-bottom: 1px solid #4b545c; padding: 12px 0 0 8px; }
  .menu { display: flex; flex-direction: column; align-items: center; padding-top: 8px; gap: 3px; }
  .menu-item { width: 58px; height: 34px; border-radius: 4px; color: #c2c7d0; display: flex; align-items: center; justify-content: center; padding: 0 5px 3px 0; }
  .menu-item.active { background: #007bff; color: #fff; box-shadow: 0 1px 3px rgba(0, 0, 0, .3); }
  .content { flex: 1; min-width: 0; display: flex; flex-direction: column; }
  .navbar { height: 50px; flex: none; background: #3f3358; border-bottom: 1px solid #565368; display: flex; align-items: center; padding-left: 23px; font-size: 12.500px; line-height: 20px; white-space: nowrap; }
  .nb-title { margin-left: 31px; width: 315px; }
  .nb-date { width: 236px; }
  .title-row { height: 62px; flex: none; display: flex; align-items: flex-start; justify-content: space-between; padding: 10px 8px 0; }
  h1 { margin: -1px 0 0; font-weight: 400; font-size: 25.050px; line-height: 36px; color: #212529; white-space: nowrap; }
  .btns { display: flex; gap: 2px; }
  button { font: 12.600px/20px "Noto Sans CJK SC", sans-serif; color: #fff; background: #007bff; border: 0; border-radius: 3px; padding: 0; white-space: nowrap; }
  .btns button { height: 35px; width: 95px; }
  .btns button:nth-child(2) { width: 67px; }
  .btns button:nth-child(3) { width: 86px; }
  .cards { flex: 1; display: flex; gap: 16px; padding: 0 8px; align-items: flex-start; min-height: 0; }
  .palette { width: 68px; flex: none; background: #fff; border-top: 3px solid #0b0033; border-radius: 3px 0 0 3px; box-shadow: -1px 1px 2px rgba(0, 0, 0, .18); height: 376px; color: #000; }
  .pal-head { height: 37px; border-bottom: 1px solid #dfdfdf; display: flex; align-items: center; justify-content: center; padding-right: 9px; color: #212529; }
  .pal-list { padding-top: 7px; display: flex; flex-direction: column; }
  .pal-list span { height: 29px; display: flex; align-items: center; justify-content: center; padding-right: 9px; }
  .canvas { flex: 1; align-self: stretch; background: #fff; border-top: 3px solid #0b0033; border-radius: 3px 3px 0 0; display: flex; justify-content: flex-end; padding: 16px 16px 0; box-shadow: 0 0 1px rgba(0, 0, 0, .2); }
  .zoom { display: flex; flex-direction: column; gap: 4px; width: 32px; }
  .zoom button { height: 31px; }
  .zoom .q { height: 26px; display: flex; align-items: center; justify-content: center; }

  .diagram { position: absolute; inset: 0; z-index: 2; pointer-events: none; font-family: "Noto Sans CJK SC", sans-serif; font-size: 13px; }
  .dot { position: absolute; width: 15px; height: 15px; margin: -7.500px; border-radius: 50%; background: #ccc; }
  .dot.start { background: #000; }
  .dot.end { width: 23px; height: 23px; margin: -11.500px; border: 2px solid green; background: radial-gradient(circle, green 6px, #fff 7px); }
  .tip { position: absolute; height: 30px; line-height: 30px; text-align: center; border-radius: 3px; background: #333; color: #f5f5f5; white-space: nowrap; }
  .tip::before { content: ""; position: absolute; left: calc(var(--ax) - 7px); top: -7px; border: 7px solid transparent; border-top: 0; border-bottom-color: #333; }
  .tip.up::before { top: auto; bottom: -7px; border: 7px solid transparent; border-bottom: 0; border-top-color: #333; }
  .tip.bare::before { display: none; }
  .err { position: absolute; left: 762px; width: 596px; border: 1px solid #900; color: #fff; padding-left: 20px; font-size: 12.600px; white-space: nowrap; }
  .err.one { top: 177px; height: 539px; }
  .err.other { top: 726px; height: 60px; }
  h2 { margin: 0; font-weight: 400; font-size: 21.500px; line-height: 30px; }
  .err p { margin: 7px 0 0; line-height: 20px; }
  .err p.trace { margin: 166px 0 0 10px; line-height: 20.500px; }
  .err p.trace.two { margin-top: 96px; }
  .dir { padding-left: 347px; }
  .tail { display: inline-block; width: 533px; padding-left: 78px; }
  .status { position: absolute; left: 70px; top: 746px; width: 499px; height: 23px; background: #f9f9fb; border: 1px solid #bbb; border-left: 0; border-radius: 0 4px 0 0; color: #333; font: 14px/22px "Noto Sans", sans-serif; letter-spacing: .1px; padding-left: 4px; white-space: nowrap; }
</style>
